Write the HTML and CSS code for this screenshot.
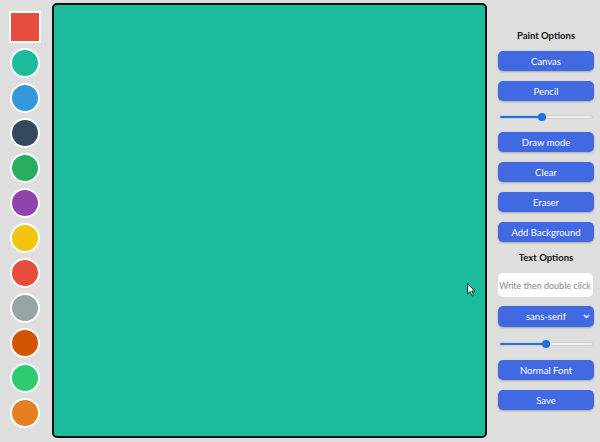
FILE: index.html
```html
<!DOCTYPE html>
<html>
<head>
<meta charset="utf-8">
<link rel="stylesheet" href="styles.css">
</head>
<body>
<div class="app">
  <div class="palette">
    <div class="swatch square red"></div>
    <div class="swatch turquoise"></div>
    <div class="swatch blue"></div>
    <div class="swatch navy"></div>
    <div class="swatch green"></div>
    <div class="swatch purple"></div>
    <div class="swatch yellow"></div>
    <div class="swatch red"></div>
    <div class="swatch gray"></div>
    <div class="swatch pumpkin"></div>
    <div class="swatch emerald"></div>
    <div class="swatch orange"></div>
  </div>
  <div class="canvas">
    <svg class="cursor" width="9" height="14" viewBox="0 0 9 14"><path d="M0.5 0.5 L0.5 11 L3 8.6 L5 13 L6.6 12.3 L4.7 8 L8 8 Z" fill="#fff" stroke="#0b3b30" stroke-width="1"/></svg>
  </div>
  <div class="panel">
    <div class="heading first">Paint Options</div>
    <button class="btn b-canvas">Canvas</button>
    <button class="btn">Pencil</button>
    <input class="range r1" type="range" min="0" max="100" value="45">
    <button class="btn b-draw">Draw mode</button>
    <button class="btn">Clear</button>
    <button class="btn">Eraser</button>
    <button class="btn">Add Background</button>
    <div class="heading second">Text Options</div>
    <input class="text" type="text" placeholder="Write then double click">
    <div class="select">
      <span>sans-serif</span>
      <svg class="chev" width="7" height="5" viewBox="0 0 7 5"><path d="M1 1 L3.5 3.5 L6 1" fill="none" stroke="#fff" stroke-width="1.4"/></svg>
    </div>
    <input class="range r2" type="range" min="0" max="100" value="50">
    <button class="btn b-normal">Normal Font</button>
    <button class="btn">Save</button>
  </div>
</div>
</body>
</html>
```

FILE: styles.css
```css
html, body {
  margin: 0;
  padding: 0;
  background: #dfdedf;
  font-family: "Lato", "Open Sans", sans-serif;
}
.app {
  display: flex;
  width: 600px;
  height: 442px;
}
.palette {
  width: 50px;
  display: flex;
  flex-direction: column;
  align-items: center;
  padding-top: 11px;
  gap: 5px;
}
.swatch {
  width: 26px;
  height: 26px;
  border: 2px solid #fff;
  border-radius: 50%;
  flex: none;
}
.swatch.square {
  width: 28px;
  height: 28px;
  border-radius: 0;
}
.red { background: #e74c3c; }
.turquoise { background: #1abc9c; }
.blue { background: #3498db; }
.navy { background: #34495e; }
.green { background: #27ae60; }
.purple { background: #8e44ad; }
.yellow { background: #f1c40f; }
.gray { background: #95a5a6; }
.pumpkin { background: #d35400; }
.emerald { background: #2ecc71; }
.orange { background: #e67e22; }

.canvas {
  position: relative;
  margin: 3px 0 0 2px;
  width: 431px;
  height: 431px;
  border: 2px solid #111;
  border-radius: 5px;
  background: #1abc9c;
}
.cursor {
  position: absolute;
  left: 413px;
  top: 278px;
}
.panel {
  margin-left: 11px;
  width: 96px;
  display: flex;
  flex-direction: column;
}
.heading {
  font-weight: 700;
  font-size: 9.5px;
  text-align: center;
  color: #111;
  line-height: 14px;
}
.heading.first { margin-top: 29px; }
.heading.second { margin-top: 9px; }
.btn {
  height: 20px;
  margin: 10px 0 0 0;
  padding: 0;
  border: none;
  border-radius: 5px;
  background: #4169e1;
  color: #fff;
  font-family: "Lato", "Open Sans", sans-serif;
  font-size: 9.5px;
  box-shadow: 0 1px 2px rgba(0,0,0,0.25);
}
.btn.b-canvas { margin-top: 8px; }
.btn.b-draw { margin-top: 7px; }
.btn.b-normal { margin-top: 14px; }
.range {
  -webkit-appearance: none;
  appearance: none;
  width: 94px;
  height: 4px;
  margin: 0 0 0 1px;
  border-radius: 2px;
  border: 1px solid #cfcfcf;
  box-sizing: border-box;
  outline: none;
}
.range.r1 {
  margin-top: 14px;
  background: linear-gradient(to right, #1f6fe5 45%, #efefef 45%);
}
.range.r2 {
  margin-top: 15px;
  background: linear-gradient(to right, #1f6fe5 50%, #efefef 50%);
}
.range::-webkit-slider-thumb {
  -webkit-appearance: none;
  appearance: none;
  width: 8px;
  height: 8px;
  border-radius: 50%;
  background: #1f6fe5;
  border: none;
}
.range.r1 + .btn { margin-top: 13px; }
.text {
  margin-top: 8px;
  height: 24px;
  box-sizing: border-box;
  width: 95px;
  border: none;
  border-radius: 5px;
  background: #fff;
  padding: 0 1px;
  font-family: "Lato", "Open Sans", sans-serif;
  font-size: 9px;
  color: #333;
  outline: none;
}
.text::placeholder { color: #8a8a8a; }
.select {
  margin-top: 9px;
  height: 21px;
  border-radius: 5px;
  background: #4169e1;
  color: #fff;
  font-size: 9.5px;
  display: flex;
  align-items: center;
  justify-content: center;
  position: relative;
  box-shadow: 0 1px 2px rgba(0,0,0,0.25);
}
.select .chev {
  position: absolute;
  right: 4px;
  top: 8px;
}
```
